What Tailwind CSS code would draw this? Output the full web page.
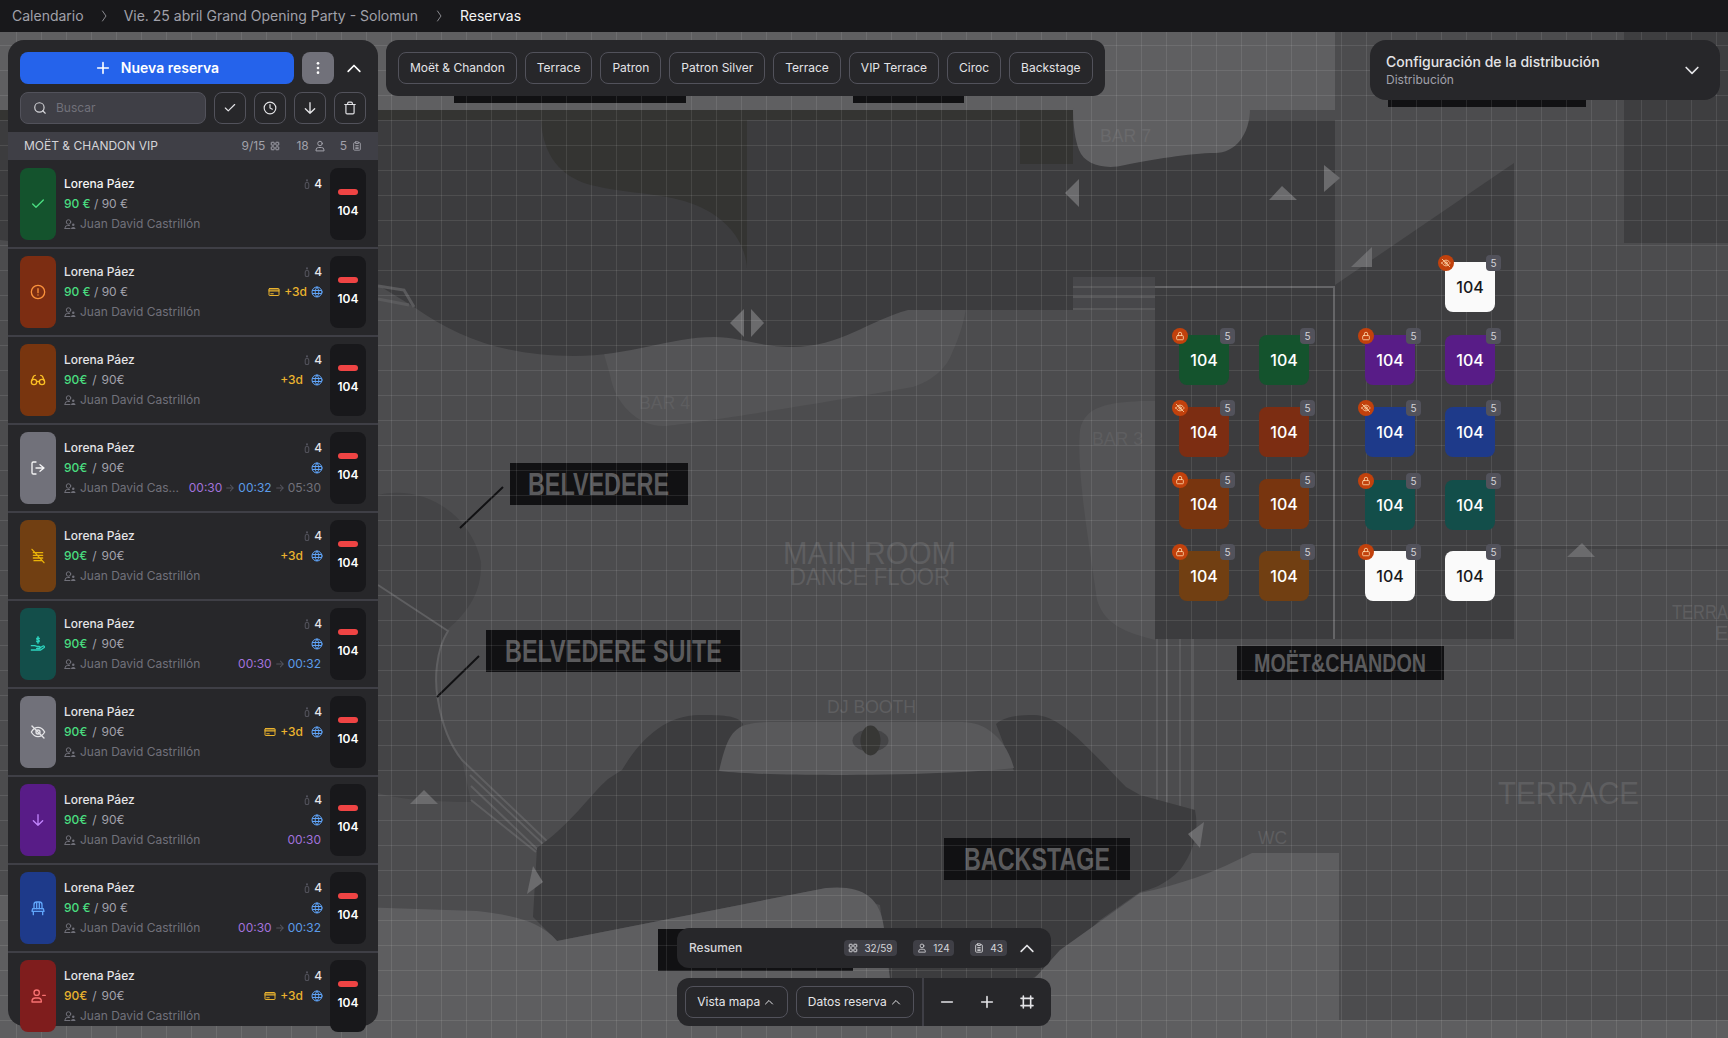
<!DOCTYPE html>
<html lang="es">
<head>
<meta charset="utf-8">
<title>Reservas</title>
<script src="https://cdn.jsdelivr.net/npm/@tailwindcss/browser@4"></script>
</head>
<body class="bg-[#18181b]">
<svg width="0" height="0" class="absolute" fill="none" stroke="currentColor" stroke-width="2" stroke-linecap="round" stroke-linejoin="round">
  <defs>
  <symbol id="check" viewBox="0 0 24 24"><path d="M20 6 9 17l-5-5" fill="none" stroke="currentColor" stroke-width="2" stroke-linecap="round" stroke-linejoin="round"/></symbol>
  <symbol id="alert" viewBox="0 0 24 24"><g fill="none" stroke="currentColor" stroke-width="2" stroke-linecap="round"><circle cx="12" cy="12" r="10"/><path d="M12 7v6M12 16.500v.1"/></g></symbol>
  <symbol id="glasses" viewBox="0 0 24 24"><g fill="none" stroke="currentColor" stroke-width="2" stroke-linecap="round" stroke-linejoin="round"><circle cx="6" cy="15" r="4"/><circle cx="18" cy="15" r="4"/><path d="M14 15a2 2 0 0 0-2-1 2 2 0 0 0-2 1M2.500 13 5 7c.7-1.300 1.400-2 3-2M21.500 13 19 7c-.7-1.300-1.500-2-3-2"/></g></symbol>
  <symbol id="logout" viewBox="0 0 24 24"><g fill="none" stroke="currentColor" stroke-width="2" stroke-linecap="round" stroke-linejoin="round"><path d="M9 21H5a2 2 0 0 1-2-2V5a2 2 0 0 1 2-2h4"/><path d="m15 17 6-5-6-5M21 12H9"/></g></symbol>
  <symbol id="nolist" viewBox="0 0 24 24"><g fill="none" stroke="currentColor" stroke-width="2" stroke-linecap="round"><path d="M5 7h14M5 11h14M5 15h14M6 19h12M3 2l18 20"/></g></symbol>
  <symbol id="handcoin" viewBox="0 0 24 24"><g fill="none" stroke="currentColor" stroke-width="2" stroke-linecap="round" stroke-linejoin="round"><path d="M14 4c-.4-.8-1.100-1.200-2-1.200-1.200 0-2 .6-2 1.500s.8 1.300 2 1.600 2 .7 2 1.600-.8 1.500-2 1.500c-.9 0-1.600-.4-2-1.200M12 1v10"/><path d="M2 14.500h5l3.500 1.200h3.300a1.500 1.500 0 0 1 0 3H10"/><path d="m14.500 18 5-3a1.500 1.500 0 0 1 1.800 2.300L16 21H2"/></g></symbol>
  <symbol id="eyeoff" viewBox="0 0 24 24"><g fill="none" stroke="currentColor" stroke-width="2" stroke-linecap="round" stroke-linejoin="round"><path d="M2 12s4-7 10-7 10 7 10 7-4 7-10 7-10-7-10-7Z"/><circle cx="12" cy="12" r="3"/><path d="M3 3l18 18"/></g></symbol>
  <symbol id="arrowdown" viewBox="0 0 24 24"><path d="M12 4v16M19 13l-7 7-7-7" fill="none" stroke="currentColor" stroke-width="2" stroke-linecap="round" stroke-linejoin="round"/></symbol>
  <symbol id="chair" viewBox="0 0 24 24"><g fill="none" stroke="currentColor" stroke-width="2" stroke-linecap="round" stroke-linejoin="round"><path d="M6 13V7a4 4 0 0 1 4-4h4a4 4 0 0 1 4 4v6M10 3v10M14 3v10"/><path d="M4 13h16l1 4H3zM5 17v5M19 17v5"/></g></symbol>
  <symbol id="userminus" viewBox="0 0 24 24"><g fill="none" stroke="currentColor" stroke-width="2" stroke-linecap="round" stroke-linejoin="round"><circle cx="10" cy="7" r="4"/><path d="M3 21v-1a5 5 0 0 1 5-5h4a5 5 0 0 1 5 5v1zM19 11h4"/></g></symbol>
  <symbol id="host" viewBox="0 0 24 24"><g fill="none" stroke="currentColor" stroke-width="2" stroke-linecap="round" stroke-linejoin="round"><circle cx="9" cy="8" r="4.500"/><path d="M2 21v-1a5 5 0 0 1 5-5h4M2 21h10"/></g><circle cx="18.500" cy="13.500" r="2.500" fill="currentColor"/><path d="M14 22c0-2.500 2-4 4.500-4s4.500 1.500 4.500 4z" fill="currentColor"/></symbol>
  <symbol id="pax" viewBox="0 0 8 14"><circle cx="4" cy="2" r="1.500" fill="currentColor"/><rect x="1.500" y="4.800" width="5" height="8.500" rx="2.200" fill="none" stroke="currentColor" stroke-width="1.500"/></symbol>
  <symbol id="card" viewBox="0 0 24 24"><g fill="none" stroke="currentColor" stroke-width="2" stroke-linecap="round" stroke-linejoin="round"><rect x="2" y="5" width="20" height="14" rx="1"/><path d="M2 10h20M2 8h20M5.500 15.500h5"/></g></symbol>
  <symbol id="globe" viewBox="0 0 24 24"><g fill="none" stroke="currentColor" stroke-width="2" stroke-linecap="round" stroke-linejoin="round"><circle cx="12" cy="12" r="10"/><path d="M12 2a15 15 0 0 1 0 20 15 15 0 0 1 0-20M3 9h18M3 15h18"/></g></symbol>
  <symbol id="arrowr" viewBox="0 0 24 24"><path d="M4 12h16M13 5l7 7-7 7" fill="none" stroke="currentColor" stroke-width="2.500" stroke-linecap="round" stroke-linejoin="round"/></symbol>
  <symbol id="plus" viewBox="0 0 24 24"><path d="M12 4v16M4 12h16" fill="none" stroke="currentColor" stroke-width="2.400" stroke-linecap="round"/></symbol>
  <symbol id="minus" viewBox="0 0 24 24"><path d="M4 12h16" fill="none" stroke="currentColor" stroke-width="2.400" stroke-linecap="round"/></symbol>
  <symbol id="kebab" viewBox="0 0 24 24"><g fill="currentColor"><circle cx="12" cy="5" r="2"/><circle cx="12" cy="12" r="2"/><circle cx="12" cy="19" r="2"/></g></symbol>
  <symbol id="chevup" viewBox="0 0 24 24"><path d="m5 16 7-7 7 7" fill="none" stroke="currentColor" stroke-width="2" stroke-linecap="round" stroke-linejoin="round"/></symbol>
  <symbol id="chevdown" viewBox="0 0 24 24"><path d="m5 9 7 7 7-7" fill="none" stroke="currentColor" stroke-width="2" stroke-linecap="round" stroke-linejoin="round"/></symbol>
  <symbol id="chevright" viewBox="0 0 24 24"><path d="m9 2 7 10-7 10" fill="none" stroke="currentColor" stroke-width="2" stroke-linecap="round" stroke-linejoin="round"/></symbol>
  <symbol id="search" viewBox="0 0 24 24"><g fill="none" stroke="currentColor" stroke-width="2" stroke-linecap="round"><circle cx="11" cy="11" r="8"/><path d="m21 21-4.300-4.300"/></g></symbol>
  <symbol id="clock" viewBox="0 0 24 24"><g fill="none" stroke="currentColor" stroke-width="2" stroke-linecap="round" stroke-linejoin="round"><circle cx="12" cy="12" r="10"/><path d="M12 6v6l4 2"/></g></symbol>
  <symbol id="trash" viewBox="0 0 24 24"><g fill="none" stroke="currentColor" stroke-width="2" stroke-linecap="round" stroke-linejoin="round"><path d="M3 6h18M19 6v14a2 2 0 0 1-2 2H7a2 2 0 0 1-2-2V6M8 6V4a2 2 0 0 1 2-2h4a2 2 0 0 1 2 2v2"/></g></symbol>
  <symbol id="grid" viewBox="0 0 24 24"><g fill="none" stroke="currentColor" stroke-width="2.400"><rect x="3" y="3" width="7" height="7" rx="1"/><rect x="14" y="3" width="7" height="7" rx="1"/><rect x="3" y="14" width="7" height="7" rx="1"/><rect x="14" y="14" width="7" height="7" rx="1"/></g></symbol>
  <symbol id="user" viewBox="0 0 24 24"><g fill="none" stroke="currentColor" stroke-width="2" stroke-linecap="round" stroke-linejoin="round"><circle cx="12" cy="7" r="4.500"/><path d="M4 21v-1a5 5 0 0 1 5-5h6a5 5 0 0 1 5 5v1z"/></g></symbol>
  <symbol id="clip" viewBox="0 0 24 24"><g fill="none" stroke="currentColor" stroke-width="2.200" stroke-linecap="round" stroke-linejoin="round"><rect x="8" y="2" width="8" height="4" rx="1"/><path d="M16 4h2a2 2 0 0 1 2 2v14a2 2 0 0 1-2 2H6a2 2 0 0 1-2-2V6a2 2 0 0 1 2-2h2M9 11h6M9 15h6M9 18h6"/></g></symbol>
  <symbol id="frame" viewBox="0 0 24 24"><path d="M6.500 3v18M17.500 3v18M3 6.500h18M3 17.500h18" fill="none" stroke="currentColor" stroke-width="2.400" stroke-linecap="round"/></symbol>
  <symbol id="lock" viewBox="0 0 24 24"><g fill="none" stroke="currentColor" stroke-width="2" stroke-linecap="round" stroke-linejoin="round"><rect x="4" y="11" width="16" height="10" rx="2"/><path d="M8 11V7a4 4 0 0 1 8 0v4"/></g></symbol>
  </defs>
</svg>

<div class="w-[1728px] h-[1038px] flex flex-col overflow-hidden [font-family:Inter,sans-serif] text-[#e4e4e7]">
  <header class="h-8 shrink-0 bg-[#18181b] flex items-center pl-3 text-sm text-[#a1a1aa]">
    <span>Calendario</span>
    <svg class="size-3 mx-[14px] text-[#8a8a90]"><use href="#chevright"/></svg>
    <span>Vie. 25 abril Grand Opening Party - Solomun</span>
    <svg class="size-3 mx-[15px] text-[#8a8a90]"><use href="#chevright"/></svg>
    <span class="text-[#f4f4f5]">Reservas</span>
  </header>

  <main class="relative flex-1">
    <svg class="absolute inset-0" width="1728" height="1006" viewBox="0 32 1728 1006" font-family="Liberation Sans">
      <defs>
        <pattern id="mapgrid" x="16" y="20" width="25" height="25" patternUnits="userSpaceOnUse">
          <path d="M.5 0V25M0 .5H25" fill="none" stroke="#ffffff" stroke-opacity=".09"/>
        </pattern>
      </defs>
      <rect x="0" y="32" width="1728" height="1006" fill="#4c4c4e"/>
      <rect x="0" y="32" width="1335" height="78" fill="#5f5f61"/>
      <rect x="1624" y="32" width="104" height="211" fill="#3e3e40"/>
      <rect x="1514" y="546" width="214" height="3" fill="#424244"/>
      <path d="M1140 401C1110 403 1085 405 1080 430C1076 470 1090 550 1097 600C1105 625 1125 632 1155 640V401Z" fill="#545456"/>
      <path d="M600 340L610 375C615 405 640 428 666 426C720 420 850 398 913 387C935 380 948 365 952 353C960 335 965 320 967 300Z" fill="#545456"/>
      <path d="M0 120H1335V639H1155V310H908C870 320 840 347 792 347C760 347 740 337 714 337C670 337 630 356 574 356C510 356 460 340 414 307L378 285L0 240Z" fill="#3c3c3e"/>
      <path d="M1335 285L1514 163V639H1335Z" fill="#3e3e40"/>
      <path d="M1073 108H1250C1250 135 1235 153 1215 153C1190 153 1150 160 1125 165C1105 170 1085 165 1079 150C1075 140 1073 125 1073 108Z" fill="#5f5f61"/>
      <rect x="0" y="110" width="1073" height="10" fill="#343432"/>
      <path d="M541 120C543 150 555 172 584 183C620 194 660 192 690 203C725 215 745 240 747 268V120Z" fill="#343432"/>
      <rect x="1020" y="120" width="53" height="44" fill="#343432"/>
      <rect x="1073" y="277" width="82" height="33" fill="#47474a"/>
      <path d="M1073 287H1155M1073 297H1155M1073 309H1155" stroke="#58585a" stroke-width="2"/>
      <path d="M1155 287H1334V639" fill="none" stroke="#656567" stroke-width="2"/>
      <path d="M378 286L404 290L414 307M378 299L409 305" fill="none" stroke="#5a5a5c" stroke-width="3"/>
      <path d="M1157 639V805M1167 639V808M1180 639V810M1193 639V812" stroke="#5a5a5c" stroke-width="2"/>

      <path d="M378 495C420 485 470 510 481 562C482 590 470 610 448 629C436 650 434 680 438 700C442 725 450 745 462 760L471 802C440 802 400 800 378 793Z" fill="#444446"/>
      <path d="M378 585L448 631C436 650 434 680 438 700C442 725 450 745 462 760L552 846" fill="none" stroke="#5f5f61" stroke-width="2"/>
      <path d="M470 775L545 846M471 786L538 850M471 800L536 852" fill="none" stroke="#5f5f61" stroke-width="2"/>

      <path d="M537 848C570 825 590 795 608 779L622 770C640 740 665 715 700 715C720 715 738 715 743 724L719 771H1014L996 724C1005 716 1020 715 1034 715C1060 715 1085 745 1126 787L1140 795L1195 810C1199 830 1195 850 1180 870C1165 885 1150 890 1140 892L1100 920L1060 960L1033 978H890L880 905L826 888L557 941L533 917Z" fill="#3c3c3e"/>
      <path d="M0 895L477 911C510 915 540 920 557 941L826 888C860 885 880 895 884 928L890 980H1033L1060 950L1140 893C1180 885 1215 872 1252 853H1339V1020H1728V1038H0Z" fill="#5e5e60"/>
      <path d="M719 771C725 745 730 730 745 725C755 722 765 722 775 722H962C985 722 1005 737 1014 768C960 775 780 778 719 771Z" fill="#59595b"/>
      <ellipse cx="870.500" cy="740.500" rx="18" ry="11" fill="#454547"/>
      <ellipse cx="870.500" cy="740.500" rx="10" ry="15" fill="#373735"/>

      <g fill="#6b6b6d">
        <path d="M1065 193L1079 179V207Z"/>
        <path d="M730 323L744 309V337Z"/>
        <path d="M764 323L751 309V337Z"/>
        <path d="M1282 186L1269 200H1297Z"/>
        <path d="M1324 165L1340 178L1324 192Z"/>
        <path d="M1372 247L1351 267H1372Z"/>
        <path d="M1582 543L1567 557H1595Z"/>
        <path d="M424 790L410 804H438Z"/>
        <path d="M533 866L543 882L527 894Z"/>
        <path d="M1204 822L1188 834L1200 848Z"/>
      </g>

      <g fill="#111113">
        <rect x="454" y="70" width="232" height="33"/>
        <rect x="853" y="70" width="111" height="33"/>
        <rect x="1388" y="70" width="198" height="37"/>
        <rect x="658" y="929" width="195" height="42"/>
        <rect x="510" y="463" width="178" height="42"/>
        <rect x="486" y="630" width="254" height="42"/>
        <rect x="944" y="838" width="186" height="42"/>
        <rect x="1237" y="646" width="207" height="34"/>
      </g>
      <path d="M503 487L460 528M479 656L437 697" stroke="#111113" stroke-width="2"/>

      <g fill="#5a5a5c" font-weight="700">
        <text x="528" y="495" font-size="31" textLength="141" lengthAdjust="spacingAndGlyphs">BELVEDERE</text>
        <text x="505" y="662" font-size="31" textLength="217" lengthAdjust="spacingAndGlyphs">BELVEDERE SUITE</text>
        <text x="964" y="870" font-size="31" textLength="146" lengthAdjust="spacingAndGlyphs">BACKSTAGE</text>
        <text x="1254" y="672" font-size="25" textLength="172" lengthAdjust="spacingAndGlyphs">MOËT&amp;CHANDON</text>
      </g>
      <g fill="#5e5e60">
        <text x="783" y="564" font-size="31" textLength="173" lengthAdjust="spacingAndGlyphs">MAIN ROOM</text>
        <text x="790" y="585" font-size="23" textLength="160" lengthAdjust="spacingAndGlyphs">DANCE FLOOR</text>
        <text x="827" y="713" font-size="18" textLength="89" lengthAdjust="spacingAndGlyphs">DJ BOOTH</text>
        <text x="639" y="409" font-size="19" textLength="51" lengthAdjust="spacingAndGlyphs">BAR 4</text>
        <text x="1092" y="445" font-size="19" textLength="51" lengthAdjust="spacingAndGlyphs">BAR 3</text>
        <text x="1100" y="142" font-size="19" textLength="51" lengthAdjust="spacingAndGlyphs" fill="#6a6a6c">BAR 7</text>
        <text x="1498" y="804" font-size="31" textLength="141" lengthAdjust="spacingAndGlyphs">TERRACE</text>
        <text x="1258" y="844" font-size="18" textLength="29" lengthAdjust="spacingAndGlyphs">WC</text>
        <text x="1672" y="619" font-size="20" textLength="56" lengthAdjust="spacingAndGlyphs">TERRA</text>
        <text x="1715" y="640" font-size="20">E</text>
      </g>
      <rect x="0" y="32" width="1728" height="1006" fill="url(#mapgrid)"/>
    </svg>

    <!-- tables -->
    <div class="absolute left-[1445px] top-[230px] size-[50px] rounded-lg bg-[#fafafa] text-[#18181b] flex items-center justify-center text-base font-medium">104
      <span class="absolute -top-[7px] -right-[6px] w-[15px] h-4 rounded bg-[#52525b] text-[#d4d4d8] text-[10px] flex items-center justify-center font-normal">5</span>
      <span class="absolute -top-[7px] -left-[7px] size-4 rounded-full bg-[#c2410c] text-[#fed7aa] flex items-center justify-center"><svg class="size-2.5"><use href="#eyeoff"/></svg></span>
    </div>

    <div class="absolute left-[1179px] top-[303px] size-[50px] rounded-lg bg-[#14532d] text-white flex items-center justify-center text-base font-medium">104
      <span class="absolute -top-[7px] -right-[6px] w-[15px] h-4 rounded bg-[#52525b] text-[#d4d4d8] text-[10px] flex items-center justify-center font-normal">5</span>
      <span class="absolute -top-[7px] -left-[7px] size-4 rounded-full bg-[#c2410c] text-[#fed7aa] flex items-center justify-center"><svg class="size-2.5"><use href="#lock"/></svg></span>
    </div>
    <div class="absolute left-[1259px] top-[303px] size-[50px] rounded-lg bg-[#14532d] text-white flex items-center justify-center text-base font-medium">104
      <span class="absolute -top-[7px] -right-[6px] w-[15px] h-4 rounded bg-[#52525b] text-[#d4d4d8] text-[10px] flex items-center justify-center font-normal">5</span>
    </div>
    <div class="absolute left-[1365px] top-[303px] size-[50px] rounded-lg bg-[#581c87] text-white flex items-center justify-center text-base font-medium">104
      <span class="absolute -top-[7px] -right-[6px] w-[15px] h-4 rounded bg-[#52525b] text-[#d4d4d8] text-[10px] flex items-center justify-center font-normal">5</span>
      <span class="absolute -top-[7px] -left-[7px] size-4 rounded-full bg-[#c2410c] text-[#fed7aa] flex items-center justify-center"><svg class="size-2.5"><use href="#lock"/></svg></span>
    </div>
    <div class="absolute left-[1445px] top-[303px] size-[50px] rounded-lg bg-[#581c87] text-white flex items-center justify-center text-base font-medium">104
      <span class="absolute -top-[7px] -right-[6px] w-[15px] h-4 rounded bg-[#52525b] text-[#d4d4d8] text-[10px] flex items-center justify-center font-normal">5</span>
    </div>

    <div class="absolute left-[1179px] top-[375px] size-[50px] rounded-lg bg-[#7c2d12] text-white flex items-center justify-center text-base font-medium">104
      <span class="absolute -top-[7px] -right-[6px] w-[15px] h-4 rounded bg-[#52525b] text-[#d4d4d8] text-[10px] flex items-center justify-center font-normal">5</span>
      <span class="absolute -top-[7px] -left-[7px] size-4 rounded-full bg-[#c2410c] text-[#fed7aa] flex items-center justify-center"><svg class="size-2.5"><use href="#eyeoff"/></svg></span>
    </div>
    <div class="absolute left-[1259px] top-[375px] size-[50px] rounded-lg bg-[#7c2d12] text-white flex items-center justify-center text-base font-medium">104
      <span class="absolute -top-[7px] -right-[6px] w-[15px] h-4 rounded bg-[#52525b] text-[#d4d4d8] text-[10px] flex items-center justify-center font-normal">5</span>
    </div>
    <div class="absolute left-[1365px] top-[375px] size-[50px] rounded-lg bg-[#1e3a8a] text-white flex items-center justify-center text-base font-medium">104
      <span class="absolute -top-[7px] -right-[6px] w-[15px] h-4 rounded bg-[#52525b] text-[#d4d4d8] text-[10px] flex items-center justify-center font-normal">5</span>
      <span class="absolute -top-[7px] -left-[7px] size-4 rounded-full bg-[#c2410c] text-[#fed7aa] flex items-center justify-center"><svg class="size-2.5"><use href="#eyeoff"/></svg></span>
    </div>
    <div class="absolute left-[1445px] top-[375px] size-[50px] rounded-lg bg-[#1e3a8a] text-white flex items-center justify-center text-base font-medium">104
      <span class="absolute -top-[7px] -right-[6px] w-[15px] h-4 rounded bg-[#52525b] text-[#d4d4d8] text-[10px] flex items-center justify-center font-normal">5</span>
    </div>

    <div class="absolute left-[1179px] top-[447px] size-[50px] rounded-lg bg-[#78350f] text-white flex items-center justify-center text-base font-medium">104
      <span class="absolute -top-[7px] -right-[6px] w-[15px] h-4 rounded bg-[#52525b] text-[#d4d4d8] text-[10px] flex items-center justify-center font-normal">5</span>
      <span class="absolute -top-[7px] -left-[7px] size-4 rounded-full bg-[#c2410c] text-[#fed7aa] flex items-center justify-center"><svg class="size-2.5"><use href="#lock"/></svg></span>
    </div>
    <div class="absolute left-[1259px] top-[447px] size-[50px] rounded-lg bg-[#78350f] text-white flex items-center justify-center text-base font-medium">104
      <span class="absolute -top-[7px] -right-[6px] w-[15px] h-4 rounded bg-[#52525b] text-[#d4d4d8] text-[10px] flex items-center justify-center font-normal">5</span>
    </div>
    <div class="absolute left-[1365px] top-[448px] size-[50px] rounded-lg bg-[#134e4a] text-white flex items-center justify-center text-base font-medium">104
      <span class="absolute -top-[7px] -right-[6px] w-[15px] h-4 rounded bg-[#52525b] text-[#d4d4d8] text-[10px] flex items-center justify-center font-normal">5</span>
      <span class="absolute -top-[7px] -left-[7px] size-4 rounded-full bg-[#c2410c] text-[#fed7aa] flex items-center justify-center"><svg class="size-2.5"><use href="#lock"/></svg></span>
    </div>
    <div class="absolute left-[1445px] top-[448px] size-[50px] rounded-lg bg-[#134e4a] text-white flex items-center justify-center text-base font-medium">104
      <span class="absolute -top-[7px] -right-[6px] w-[15px] h-4 rounded bg-[#52525b] text-[#d4d4d8] text-[10px] flex items-center justify-center font-normal">5</span>
    </div>

    <div class="absolute left-[1179px] top-[519px] size-[50px] rounded-lg bg-[#713f12] text-white flex items-center justify-center text-base font-medium">104
      <span class="absolute -top-[7px] -right-[6px] w-[15px] h-4 rounded bg-[#52525b] text-[#d4d4d8] text-[10px] flex items-center justify-center font-normal">5</span>
      <span class="absolute -top-[7px] -left-[7px] size-4 rounded-full bg-[#c2410c] text-[#fed7aa] flex items-center justify-center"><svg class="size-2.5"><use href="#lock"/></svg></span>
    </div>
    <div class="absolute left-[1259px] top-[519px] size-[50px] rounded-lg bg-[#713f12] text-white flex items-center justify-center text-base font-medium">104
      <span class="absolute -top-[7px] -right-[6px] w-[15px] h-4 rounded bg-[#52525b] text-[#d4d4d8] text-[10px] flex items-center justify-center font-normal">5</span>
    </div>
    <div class="absolute left-[1365px] top-[519px] size-[50px] rounded-lg bg-[#fafafa] text-[#18181b] flex items-center justify-center text-base font-medium">104
      <span class="absolute -top-[7px] -right-[6px] w-[15px] h-4 rounded bg-[#52525b] text-[#d4d4d8] text-[10px] flex items-center justify-center font-normal">5</span>
      <span class="absolute -top-[7px] -left-[7px] size-4 rounded-full bg-[#c2410c] text-[#fed7aa] flex items-center justify-center"><svg class="size-2.5"><use href="#lock"/></svg></span>
    </div>
    <div class="absolute left-[1445px] top-[519px] size-[50px] rounded-lg bg-[#fafafa] text-[#18181b] flex items-center justify-center text-base font-medium">104
      <span class="absolute -top-[7px] -right-[6px] w-[15px] h-4 rounded bg-[#52525b] text-[#d4d4d8] text-[10px] flex items-center justify-center font-normal">5</span>
    </div>

    <!-- chips -->
    <div class="absolute left-[386px] top-2 h-14 rounded-xl bg-[#27272a] flex items-center gap-2 px-3 text-xs text-[#e4e4e7]">
      <button class="h-8 px-[11px] rounded-lg border border-[#52525b] whitespace-nowrap">Moët &amp; Chandon</button>
      <button class="h-8 px-[11px] rounded-lg border border-[#52525b]">Terrace</button>
      <button class="h-8 px-[11px] rounded-lg border border-[#52525b]">Patron</button>
      <button class="h-8 px-[11px] rounded-lg border border-[#52525b] whitespace-nowrap">Patron Silver</button>
      <button class="h-8 px-[11px] rounded-lg border border-[#52525b]">Terrace</button>
      <button class="h-8 px-[11px] rounded-lg border border-[#52525b] whitespace-nowrap">VIP Terrace</button>
      <button class="h-8 px-[11px] rounded-lg border border-[#52525b]">Ciroc</button>
      <button class="h-8 px-[11px] rounded-lg border border-[#52525b]">Backstage</button>
    </div>

    <!-- config -->
    <div class="absolute left-[1370px] top-2 w-[350px] h-[60px] rounded-2xl bg-[#27272a] flex items-center justify-between pl-4 pr-[18px]">
      <div class="flex flex-col">
        <span class="text-sm leading-5 font-medium text-[#e4e4e7]">Configuración de la distribución</span>
        <span class="text-xs leading-4 text-[#a1a1aa]">Distribución</span>
      </div>
      <svg class="size-5 text-[#e4e4e7]"><use href="#chevdown"/></svg>
    </div>

    <!-- summary -->
    <div class="absolute left-[677px] top-[896px] w-[374px] flex flex-col gap-2.5">
      <div class="h-10 rounded-xl bg-[#27272a] flex items-center pl-3 pr-3.5 text-[#d4d4d8]">
        <span class="text-xs font-medium mr-auto">Resumen</span>
        <span class="h-4 w-[53px] rounded bg-[#3f3f46] text-[10px] flex items-center justify-center gap-1.5"><svg class="size-2.5"><use href="#grid"/></svg>32/59</span>
        <span class="h-4 w-[41px] ml-4 rounded bg-[#3f3f46] text-[10px] flex items-center justify-center gap-1.5"><svg class="size-2.5"><use href="#user"/></svg>124</span>
        <span class="h-4 w-[37px] ml-4 rounded bg-[#3f3f46] text-[10px] flex items-center justify-center gap-1.5"><svg class="size-2.5"><use href="#clip"/></svg>43</span>
        <svg class="size-5 ml-2.5 text-[#e4e4e7]"><use href="#chevup"/></svg>
      </div>
      <div class="h-12 rounded-xl bg-[#27272a] flex items-stretch text-xs text-[#e4e4e7]">
        <div class="flex items-center gap-2 pl-2 pr-2 border-r-2 border-[#3f3f46] w-[247px]">
          <button class="h-8 w-[103px] rounded-lg border border-[#52525b] flex items-center justify-center gap-[3px]">Vista mapa <svg class="size-3"><use href="#chevup"/></svg></button>
          <button class="h-8 w-[119px] rounded-lg border border-[#52525b] flex items-center justify-center gap-[3px] whitespace-nowrap">Datos reserva <svg class="size-3"><use href="#chevup"/></svg></button>
        </div>
        <div class="flex-1 flex items-center justify-between pl-[15px] pr-4">
          <svg class="size-4"><use href="#minus"/></svg>
          <svg class="size-4"><use href="#plus"/></svg>
          <svg class="size-4"><use href="#frame"/></svg>
        </div>
      </div>
    </div>

    <!-- reservation panel -->
    <aside class="absolute left-2 top-2 w-[370px] h-[986px] rounded-2xl bg-[#27272a] flex flex-col">
      <div class="flex items-center gap-2 px-3 pt-3 text-white">
        <button class="w-[274px] shrink-0 h-8 rounded-lg bg-[#2563eb] flex items-center justify-center gap-2.5 text-sm font-semibold"><svg class="size-4"><use href="#plus"/></svg>Nueva reserva</button>
        <button class="size-8 shrink-0 rounded-lg bg-[#71717a] flex items-center justify-center"><svg class="size-4"><use href="#kebab"/></svg></button>
        <button class="size-8 shrink-0 -ml-1 flex items-center justify-center"><svg class="size-5"><use href="#chevup"/></svg></button>
      </div>
      <div class="flex items-center gap-2 px-3 mt-2 text-[#e4e4e7]">
        <div class="w-[186px] h-8 rounded-lg bg-[#3f3f46] border border-[#52525b] flex items-center gap-[9px] pl-3 text-xs text-[#71717a]"><svg class="size-3.5 text-[#d4d4d8]"><use href="#search"/></svg>Buscar</div>
        <button class="size-8 rounded-lg border border-[#52525b] flex items-center justify-center"><svg class="size-3.5"><use href="#check"/></svg></button>
        <button class="size-8 rounded-lg border border-[#52525b] flex items-center justify-center"><svg class="size-3.5"><use href="#clock"/></svg></button>
        <button class="size-8 rounded-lg border border-[#52525b] flex items-center justify-center"><svg class="size-4"><use href="#arrowdown"/></svg></button>
        <button class="size-8 rounded-lg border border-[#52525b] flex items-center justify-center"><svg class="size-3.5"><use href="#trash"/></svg></button>
      </div>
      <div class="mt-2 h-7 shrink-0 bg-[#3f3f46] flex items-center px-4 text-xs text-[#d4d4d8]">
        <span class="mr-auto">MOËT &amp; CHANDON VIP</span>
        <span class="flex items-center gap-[5px] text-[#a1a1aa]">9/15<svg class="size-2.5"><use href="#grid"/></svg></span>
        <span class="flex items-center gap-[5px] ml-4 text-[#a1a1aa]">18<svg class="size-3"><use href="#user"/></svg></span>
        <span class="flex items-center gap-[5px] ml-[14px] text-[#a1a1aa]">5<svg class="size-2.5"><use href="#clip"/></svg></span>
      </div>

      <div class="mt-px flex flex-col text-xs leading-5">
        <!-- 1 -->
        <div class="flex gap-2 px-3 py-[7px] border-b-2 border-[#3f3f46]">
          <div class="w-9 h-[72px] shrink-0 rounded-lg bg-[#14532d] text-[#4ade80] flex items-center justify-center"><svg class="size-4"><use href="#check"/></svg></div>
          <div class="flex-1 min-w-0 flex flex-col justify-center">
            <div class="flex justify-between font-medium text-[#f4f4f5]"><span>Lorena Páez</span><span class="flex items-center gap-1"><svg class="w-1.5 h-2.5 text-[#52525b]"><use href="#pax"/></svg>4</span></div>
            <div class="flex justify-between"><span><b class="font-medium text-[#4ade80]">90 €</b><span class="text-[#a1a1aa]"> / 90 €</span></span></div>
            <div class="flex justify-between text-[#71717a]"><span class="flex items-center gap-1"><svg class="size-3"><use href="#host"/></svg>Juan David Castrillón</span></div>
          </div>
          <div class="w-9 h-[72px] shrink-0 rounded-lg bg-[#18181b] flex flex-col items-center justify-center gap-2"><span class="w-5 h-1.5 rounded-full bg-[#ef4444]"></span><span class="leading-4 font-semibold text-white">104</span></div>
        </div>
        <!-- 2 -->
        <div class="flex gap-2 px-3 py-[7px] border-b-2 border-[#3f3f46]">
          <div class="w-9 h-[72px] shrink-0 rounded-lg bg-[#7c2d12] text-[#fb923c] flex items-center justify-center"><svg class="size-4"><use href="#alert"/></svg></div>
          <div class="flex-1 min-w-0 flex flex-col justify-center">
            <div class="flex justify-between font-medium text-[#e4e4e7]"><span>Lorena Páez</span><span class="flex items-center gap-1"><svg class="w-1.5 h-2.5 text-[#52525b]"><use href="#pax"/></svg>4</span></div>
            <div class="flex justify-between"><span><b class="font-medium text-[#4ade80]">90 €</b><span class="text-[#a1a1aa]"> / 90 €</span></span><span class="flex items-center text-[#eab32e] font-medium -mr-px"><svg class="size-3 mr-1"><use href="#card"/></svg>+3d<svg class="size-3 ml-1 text-[#60a5fa]"><use href="#globe"/></svg></span></div>
            <div class="flex justify-between text-[#71717a]"><span class="flex items-center gap-1"><svg class="size-3"><use href="#host"/></svg>Juan David Castrillón</span></div>
          </div>
          <div class="w-9 h-[72px] shrink-0 rounded-lg bg-[#18181b] flex flex-col items-center justify-center gap-2"><span class="w-5 h-1.5 rounded-full bg-[#ef4444]"></span><span class="leading-4 font-semibold text-white">104</span></div>
        </div>
        <!-- 3 -->
        <div class="flex gap-2 px-3 py-[7px] border-b-2 border-[#3f3f46]">
          <div class="w-9 h-[72px] shrink-0 rounded-lg bg-[#78350f] text-[#fbbf24] flex items-center justify-center"><svg class="size-4"><use href="#glasses"/></svg></div>
          <div class="flex-1 min-w-0 flex flex-col justify-center">
            <div class="flex justify-between font-medium text-[#e4e4e7]"><span>Lorena Páez</span><span class="flex items-center gap-1"><svg class="w-1.5 h-2.5 text-[#52525b]"><use href="#pax"/></svg>4</span></div>
            <div class="flex justify-between"><span class="[word-spacing:1.500px]"><b class="font-medium text-[#4ade80]">90€</b><span class="text-[#a1a1aa]"> / 90€</span></span><span class="flex items-center text-[#eab32e] font-medium -mr-px">+3d<svg class="size-3 ml-2 text-[#60a5fa]"><use href="#globe"/></svg></span></div>
            <div class="flex justify-between text-[#71717a]"><span class="flex items-center gap-1"><svg class="size-3"><use href="#host"/></svg>Juan David Castrillón</span></div>
          </div>
          <div class="w-9 h-[72px] shrink-0 rounded-lg bg-[#18181b] flex flex-col items-center justify-center gap-2"><span class="w-5 h-1.5 rounded-full bg-[#ef4444]"></span><span class="leading-4 font-semibold text-white">104</span></div>
        </div>
        <!-- 4 -->
        <div class="flex gap-2 px-3 py-[7px] border-b-2 border-[#3f3f46]">
          <div class="w-9 h-[72px] shrink-0 rounded-lg bg-[#71717a] text-[#f4f4f5] flex items-center justify-center"><svg class="size-4"><use href="#logout"/></svg></div>
          <div class="flex-1 min-w-0 flex flex-col justify-center">
            <div class="flex justify-between font-medium text-[#e4e4e7]"><span>Lorena Páez</span><span class="flex items-center gap-1"><svg class="w-1.5 h-2.5 text-[#52525b]"><use href="#pax"/></svg>4</span></div>
            <div class="flex justify-between"><span class="[word-spacing:1.500px]"><b class="font-medium text-[#4ade80]">90€</b><span class="text-[#a1a1aa]"> / 90€</span></span><span class="flex items-center -mr-px"><svg class="size-3 text-[#60a5fa]"><use href="#globe"/></svg></span></div>
            <div class="flex justify-between text-[#71717a]"><span class="flex items-center gap-1"><svg class="size-3"><use href="#host"/></svg>Juan David Cas...</span><span class="flex items-center gap-[3px] pr-px"><span class="text-[#a272dc]">00:30</span><svg class="size-2.5 text-[#52525b]"><use href="#arrowr"/></svg><span class="text-[#5b9be8]">00:32</span><svg class="size-2.5 text-[#52525b]"><use href="#arrowr"/></svg><span>05:30</span></span></div>
          </div>
          <div class="w-9 h-[72px] shrink-0 rounded-lg bg-[#18181b] flex flex-col items-center justify-center gap-2"><span class="w-5 h-1.5 rounded-full bg-[#ef4444]"></span><span class="leading-4 font-semibold text-white">104</span></div>
        </div>
        <!-- 5 -->
        <div class="flex gap-2 px-3 py-[7px] border-b-2 border-[#3f3f46]">
          <div class="w-9 h-[72px] shrink-0 rounded-lg bg-[#713f12] text-[#eab308] flex items-center justify-center"><svg class="size-4"><use href="#nolist"/></svg></div>
          <div class="flex-1 min-w-0 flex flex-col justify-center">
            <div class="flex justify-between font-medium text-[#e4e4e7]"><span>Lorena Páez</span><span class="flex items-center gap-1"><svg class="w-1.5 h-2.5 text-[#52525b]"><use href="#pax"/></svg>4</span></div>
            <div class="flex justify-between"><span class="[word-spacing:1.500px]"><b class="font-medium text-[#4ade80]">90€</b><span class="text-[#a1a1aa]"> / 90€</span></span><span class="flex items-center text-[#eab32e] font-medium -mr-px">+3d<svg class="size-3 ml-2 text-[#60a5fa]"><use href="#globe"/></svg></span></div>
            <div class="flex justify-between text-[#71717a]"><span class="flex items-center gap-1"><svg class="size-3"><use href="#host"/></svg>Juan David Castrillón</span></div>
          </div>
          <div class="w-9 h-[72px] shrink-0 rounded-lg bg-[#18181b] flex flex-col items-center justify-center gap-2"><span class="w-5 h-1.5 rounded-full bg-[#ef4444]"></span><span class="leading-4 font-semibold text-white">104</span></div>
        </div>
        <!-- 6 -->
        <div class="flex gap-2 px-3 py-[7px] border-b-2 border-[#3f3f46]">
          <div class="w-9 h-[72px] shrink-0 rounded-lg bg-[#134e4a] text-[#2dd4bf] flex items-center justify-center"><svg class="size-4"><use href="#handcoin"/></svg></div>
          <div class="flex-1 min-w-0 flex flex-col justify-center">
            <div class="flex justify-between font-medium text-[#e4e4e7]"><span>Lorena Páez</span><span class="flex items-center gap-1"><svg class="w-1.5 h-2.5 text-[#52525b]"><use href="#pax"/></svg>4</span></div>
            <div class="flex justify-between"><span class="[word-spacing:1.500px]"><b class="font-medium text-[#4ade80]">90€</b><span class="text-[#a1a1aa]"> / 90€</span></span><span class="flex items-center -mr-px"><svg class="size-3 text-[#60a5fa]"><use href="#globe"/></svg></span></div>
            <div class="flex justify-between text-[#71717a]"><span class="flex items-center gap-1"><svg class="size-3"><use href="#host"/></svg>Juan David Castrillón</span><span class="flex items-center gap-[3px] pr-px"><span class="text-[#a272dc]">00:30</span><svg class="size-2.5 text-[#52525b]"><use href="#arrowr"/></svg><span class="text-[#5b9be8]">00:32</span></span></div>
          </div>
          <div class="w-9 h-[72px] shrink-0 rounded-lg bg-[#18181b] flex flex-col items-center justify-center gap-2"><span class="w-5 h-1.5 rounded-full bg-[#ef4444]"></span><span class="leading-4 font-semibold text-white">104</span></div>
        </div>
        <!-- 7 -->
        <div class="flex gap-2 px-3 py-[7px] border-b-2 border-[#3f3f46]">
          <div class="w-9 h-[72px] shrink-0 rounded-lg bg-[#71717a] text-[#e4e4e7] flex items-center justify-center"><svg class="size-4"><use href="#eyeoff"/></svg></div>
          <div class="flex-1 min-w-0 flex flex-col justify-center">
            <div class="flex justify-between font-medium text-[#e4e4e7]"><span>Lorena Páez</span><span class="flex items-center gap-1"><svg class="w-1.5 h-2.5 text-[#52525b]"><use href="#pax"/></svg>4</span></div>
            <div class="flex justify-between"><span class="[word-spacing:1.500px]"><b class="font-medium text-[#4ade80]">90€</b><span class="text-[#a1a1aa]"> / 90€</span></span><span class="flex items-center text-[#eab32e] font-medium -mr-px"><svg class="size-3 mr-1"><use href="#card"/></svg>+3d<svg class="size-3 ml-2 text-[#60a5fa]"><use href="#globe"/></svg></span></div>
            <div class="flex justify-between text-[#71717a]"><span class="flex items-center gap-1"><svg class="size-3"><use href="#host"/></svg>Juan David Castrillón</span></div>
          </div>
          <div class="w-9 h-[72px] shrink-0 rounded-lg bg-[#18181b] flex flex-col items-center justify-center gap-2"><span class="w-5 h-1.5 rounded-full bg-[#ef4444]"></span><span class="leading-4 font-semibold text-white">104</span></div>
        </div>
        <!-- 8 -->
        <div class="flex gap-2 px-3 py-[7px] border-b-2 border-[#3f3f46]">
          <div class="w-9 h-[72px] shrink-0 rounded-lg bg-[#581c87] text-[#c084fc] flex items-center justify-center"><svg class="size-4"><use href="#arrowdown"/></svg></div>
          <div class="flex-1 min-w-0 flex flex-col justify-center">
            <div class="flex justify-between font-medium text-[#e4e4e7]"><span>Lorena Páez</span><span class="flex items-center gap-1"><svg class="w-1.5 h-2.5 text-[#52525b]"><use href="#pax"/></svg>4</span></div>
            <div class="flex justify-between"><span class="[word-spacing:1.500px]"><b class="font-medium text-[#4ade80]">90€</b><span class="text-[#a1a1aa]"> / 90€</span></span><span class="flex items-center -mr-px"><svg class="size-3 text-[#60a5fa]"><use href="#globe"/></svg></span></div>
            <div class="flex justify-between text-[#71717a]"><span class="flex items-center gap-1"><svg class="size-3"><use href="#host"/></svg>Juan David Castrillón</span><span class="text-[#a272dc] pr-px">00:30</span></div>
          </div>
          <div class="w-9 h-[72px] shrink-0 rounded-lg bg-[#18181b] flex flex-col items-center justify-center gap-2"><span class="w-5 h-1.5 rounded-full bg-[#ef4444]"></span><span class="leading-4 font-semibold text-white">104</span></div>
        </div>
        <!-- 9 -->
        <div class="flex gap-2 px-3 py-[7px] border-b-2 border-[#3f3f46]">
          <div class="w-9 h-[72px] shrink-0 rounded-lg bg-[#1e3a8a] text-[#60a5fa] flex items-center justify-center"><svg class="size-4"><use href="#chair"/></svg></div>
          <div class="flex-1 min-w-0 flex flex-col justify-center">
            <div class="flex justify-between font-medium text-[#e4e4e7]"><span>Lorena Páez</span><span class="flex items-center gap-1"><svg class="w-1.5 h-2.5 text-[#52525b]"><use href="#pax"/></svg>4</span></div>
            <div class="flex justify-between"><span><b class="font-medium text-[#4ade80]">90 €</b><span class="text-[#a1a1aa]"> / 90 €</span></span><span class="flex items-center -mr-px"><svg class="size-3 text-[#60a5fa]"><use href="#globe"/></svg></span></div>
            <div class="flex justify-between text-[#71717a]"><span class="flex items-center gap-1"><svg class="size-3"><use href="#host"/></svg>Juan David Castrillón</span><span class="flex items-center gap-[3px] pr-px"><span class="text-[#a272dc]">00:30</span><svg class="size-2.5 text-[#52525b]"><use href="#arrowr"/></svg><span class="text-[#5b9be8]">00:32</span></span></div>
          </div>
          <div class="w-9 h-[72px] shrink-0 rounded-lg bg-[#18181b] flex flex-col items-center justify-center gap-2"><span class="w-5 h-1.5 rounded-full bg-[#ef4444]"></span><span class="leading-4 font-semibold text-white">104</span></div>
        </div>
        <!-- 10 -->
        <div class="flex gap-2 px-3 py-[7px]">
          <div class="w-9 h-[72px] shrink-0 rounded-lg bg-[#7f1d1d] text-[#f87171] flex items-center justify-center"><svg class="size-4"><use href="#userminus"/></svg></div>
          <div class="flex-1 min-w-0 flex flex-col justify-center">
            <div class="flex justify-between font-medium text-[#e4e4e7]"><span>Lorena Páez</span><span class="flex items-center gap-1"><svg class="w-1.5 h-2.5 text-[#52525b]"><use href="#pax"/></svg>4</span></div>
            <div class="flex justify-between"><span class="[word-spacing:1.500px]"><b class="font-medium text-[#eab32e]">90€</b><span class="text-[#a1a1aa]"> / 90€</span></span><span class="flex items-center text-[#eab32e] font-medium -mr-px"><svg class="size-3 mr-1"><use href="#card"/></svg>+3d<svg class="size-3 ml-2 text-[#60a5fa]"><use href="#globe"/></svg></span></div>
            <div class="flex justify-between text-[#71717a]"><span class="flex items-center gap-1"><svg class="size-3"><use href="#host"/></svg>Juan David Castrillón</span></div>
          </div>
          <div class="w-9 h-[72px] shrink-0 rounded-lg bg-[#18181b] flex flex-col items-center justify-center gap-2"><span class="w-5 h-1.5 rounded-full bg-[#ef4444]"></span><span class="leading-4 font-semibold text-white">104</span></div>
        </div>
      </div>
    </aside>
  </main>
</div>
</body>
</html>
